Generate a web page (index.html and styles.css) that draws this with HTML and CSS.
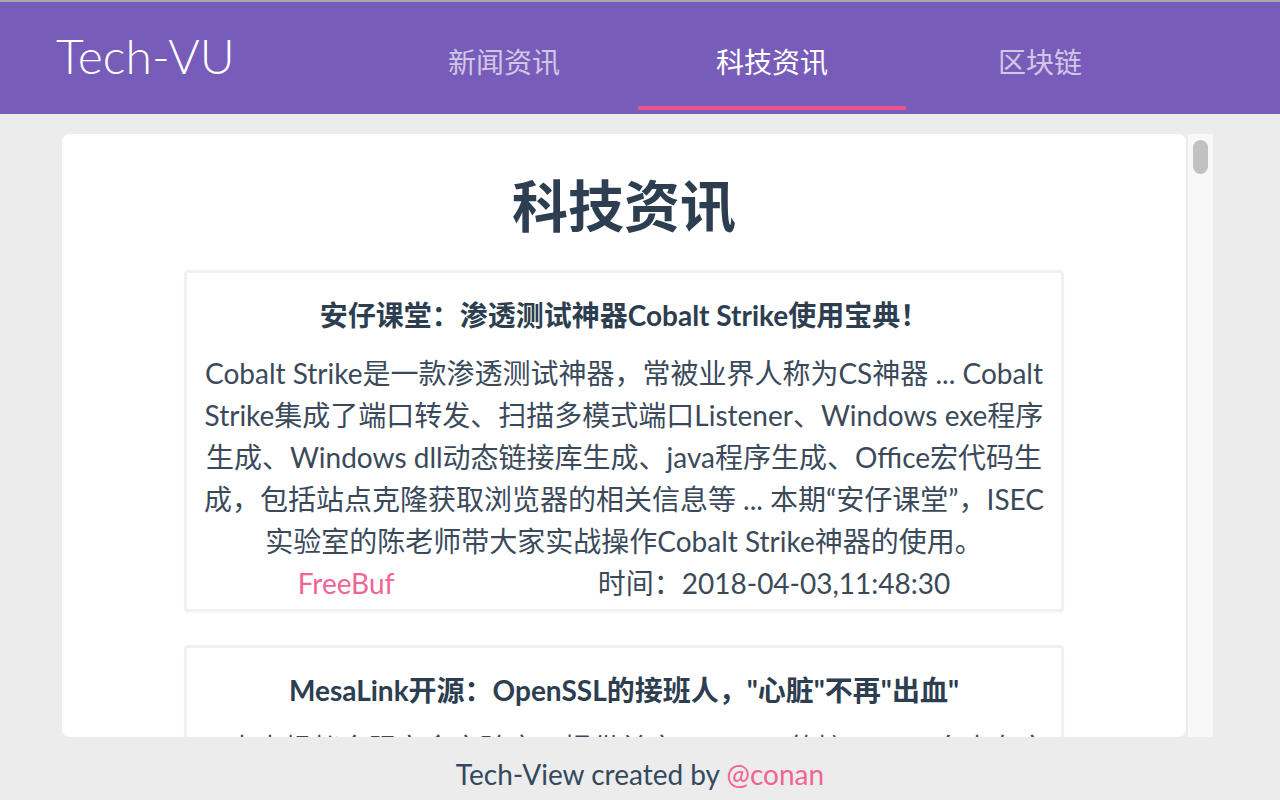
FILE: index.html
```html
<!DOCTYPE html>
<html lang="zh-CN">
<head>
<meta charset="utf-8">
<title>Tech-VU</title>
<link rel="stylesheet" href="styles.css">
</head>
<body>
<header class="topbar">
  <div class="logo">Tech-VU</div>
  <nav class="nav">
    <a class="nav-item">新闻资讯</a>
    <a class="nav-item active">科技资讯</a>
    <a class="nav-item">区块链</a>
  </nav>
</header>
<main class="main">
  <section class="panel">
    <h1 class="page-title">科技资讯</h1>
    <article class="news-card">
      <h3 class="news-title">安仔课堂：渗透测试神器Cobalt Strike使用宝典！</h3>
      <p class="news-body">Cobalt Strike是一款渗透测试神器，常被业界人称为CS神器 ... Cobalt Strike集成了端口转发、扫描多模式端口Listener、Windows exe程序生成、Windows dll动态链接库生成、java程序生成、Office宏代码生成，包括站点克隆获取浏览器的相关信息等 ... 本期“安仔课堂”，ISEC实验室的陈老师带大家实战操作Cobalt Strike神器的使用。</p>
      <div class="news-meta">
        <span class="source">FreeBuf</span>
        <span class="time">时间：2018-04-03,11:48:30</span>
      </div>
    </article>
    <article class="news-card">
      <h3 class="news-title">MesaLink开源：OpenSSL的接班人，"心脏"不再"出血"</h3>
      <p class="news-body">... 本由蚂蚁金服安全实验室，提供兼容OpenSSL的接口 ... 面向内存安全</p>
    </article>
  </section>
  <div class="scrollbar"><div class="thumb"></div></div>
</main>
<footer class="footer">Tech-View created by <a class="author">@conan</a></footer>
</body>
</html>
```

FILE: styles.css
```css
html, body {
  margin: 0;
  padding: 0;
}
body {
  height: 800px;
  overflow: hidden;
  background: #ececec;
  font-family: "Lato", "Noto Sans CJK SC", sans-serif;
  font-size: 28px;
  color: #2c3e50;
}
.topbar {
  height: 112px;
  border-top: 2px solid #a9a9a9;
  background: #785cb9;
  display: flex;
  align-items: flex-start;
  padding: 0 106px 0 56px;
}
.logo {
  color: #fff;
  font-weight: 300;
  font-size: 48px;
  line-height: 56px;
  margin-top: 26px;
}
.nav {
  margin-left: auto;
  display: flex;
}
.nav-item {
  width: 268px;
  text-align: center;
  color: rgba(255, 255, 255, 0.68);
  font-size: 28px;
  line-height: 42px;
  padding-top: 39px;
  padding-bottom: 23px;
  border-bottom: 4px solid transparent;
}
.nav-item.active {
  color: #fff;
  border-bottom-color: #e9558a;
}
.main {
  display: flex;
  gap: 2px;
  width: 1151px;
  height: 603px;
  margin: 20px 0 0 62px;
}
.panel {
  flex: 1;
  background: #fff;
  border-radius: 8px;
  overflow: hidden;
}
.scrollbar {
  width: 15px;
  padding: 6px 5px;
  background: #f8f8f8;
}
.thumb {
  height: 34px;
  border-radius: 8px;
  background: #c1c1c1;
}
.page-title {
  margin: 38px 0 31px;
  font-size: 56px;
  line-height: 67px;
  font-weight: 700;
  text-align: center;
}
.news-card {
  width: 874px;
  margin: 0 auto 33px;
  border: 3px solid #f1f1f1;
  border-radius: 4px;
  box-shadow: 0 1px 2px rgba(0, 0, 0, 0.04);
  padding: 24px 0 5px;
  text-align: center;
}
.news-title {
  margin: 0;
  font-size: 28px;
  line-height: 36px;
  font-weight: 700;
}
.news-body {
  margin: 19px 0 0;
  padding: 0 9px;
  line-height: 42px;
  color: #3b4a5b;
}
.news-meta {
  display: flex;
  justify-content: space-around;
  padding: 0 9px;
  line-height: 42px;
  color: #3b4a5b;
}
.source {
  color: #f06595;
}
.footer {
  text-align: center;
  line-height: 42px;
  padding-top: 16px;
  color: #34495e;
}
.author {
  color: #f06595;
}
```
